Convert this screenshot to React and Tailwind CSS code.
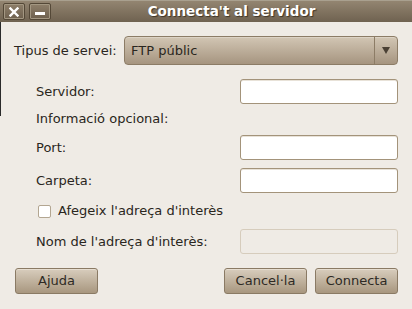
export default function App() {
  const font = { fontFamily: '"DejaVu Sans", "Liberation Sans", sans-serif' };
  const input =
    "w-[158px] h-[25px] rounded-[3px] border border-[#a3937a] bg-white shadow-[inset_0_1px_0_#e8e2d8]";
  const button =
    "h-[26px] rounded-[3px] border border-[#8a7a64] bg-gradient-to-b from-[#d8cdbd] to-[#a8977f] text-[13px] text-[#2e2a24] shadow-[inset_0_1px_0_#e6ddd0]";

  return (
    <div className="w-[412px] h-[309px] bg-[#efebe5] flex flex-col relative" style={font}>
      {/* title bar */}
      <div className="h-[22px] flex items-center bg-gradient-to-b from-[#938571] to-[#6f6250] border-t border-[#a9a08f]">
        <div className="flex gap-[4px] ml-[3px]">
          <div className="w-[22px] h-[17px] rounded-[2px] border border-[#544837] bg-gradient-to-b from-[#8e7f6a] to-[#6e604e] shadow-[inset_0_0_0_1px_#a39782] flex items-center justify-center">
            <svg width="10" height="10" viewBox="0 0 10 10">
              <path d="M1.5 1.5 L8.5 8.5 M8.5 1.5 L1.5 8.5" stroke="#ffffff" strokeWidth="2.4" strokeLinecap="square" />
            </svg>
          </div>
          <div className="w-[22px] h-[17px] rounded-[2px] border border-[#544837] bg-gradient-to-b from-[#8e7f6a] to-[#6e604e] shadow-[inset_0_0_0_1px_#a39782] flex items-end justify-center pb-[4px]">
            <div className="w-[10px] h-[3px] bg-white" />
          </div>
        </div>
        <div className="flex-1 text-center text-white font-bold text-[13.5px] [text-shadow:1px_1px_1px_#3e3426]">
          Connecta't al servidor
        </div>
      </div>

      {/* window edge shadow */}
      <div className="absolute left-0 top-[22px] w-px h-[94px] bg-[#2a2a2a]" />

      {/* body */}
      <div className="flex-1 flex flex-col text-[13px] text-[#2a2620]">
        <div className="flex items-center mt-[14px] pl-[14px] pr-[14px]">
          <span className="w-[110px]">Tipus de servei:</span>
          <div className="flex-1 h-[29px] rounded-[4px] border border-[#8c7c66] bg-gradient-to-b from-[#d2c6b4] to-[#a69580] shadow-[inset_0_1px_0_#ddd3c5] flex items-center">
            <span className="flex-1 pl-[6px]">FTP públic</span>
            <div className="w-[23px] h-full border-l border-[#8c7c66] flex items-center justify-center">
              <svg width="8" height="7" viewBox="0 0 8 7">
                <path d="M0 0 H8 L4 7 Z" fill="#4a4034" />
              </svg>
            </div>
          </div>
        </div>

        <div className="flex items-center justify-between mt-[14px] pl-[36px] pr-[14px]">
          <span>Servidor:</span>
          <div className={input} />
        </div>

        <div className="h-[17px] flex items-center mt-[6px] pl-[36px]">Informació opcional:</div>

        <div className="flex items-center justify-between mt-[8px] pl-[36px] pr-[14px]">
          <span>Port:</span>
          <div className={input} />
        </div>

        <div className="flex items-center justify-between mt-[8px] pl-[36px] pr-[14px]">
          <span>Carpeta:</span>
          <div className={input} />
        </div>

        <div className="flex items-center gap-[7px] h-[16px] mt-[10px] pl-[38px]">
          <div className="w-[13px] h-[13px] rounded-[2px] border border-[#b3a691] bg-white" />
          <span>Afegeix l'adreça d'interès</span>
        </div>

        <div className="flex items-center justify-between mt-[10px] pl-[36px] pr-[14px]">
          <span>Nom de l'adreça d'interès:</span>
          <div className="w-[158px] h-[25px] rounded-[3px] border border-[#d6ccbc] bg-[#efebe5]" />
        </div>

        <div className="flex items-center mt-[14px] pl-[15px] pr-[14px]">
          <button className={`${button} w-[83px]`}>Ajuda</button>
          <div className="flex-1" />
          <button className={`${button} w-[83px]`}>Cancel·la</button>
          <button className={`${button} w-[83px] ml-[8px]`}>Connecta</button>
        </div>
      </div>
    </div>
  );
}
